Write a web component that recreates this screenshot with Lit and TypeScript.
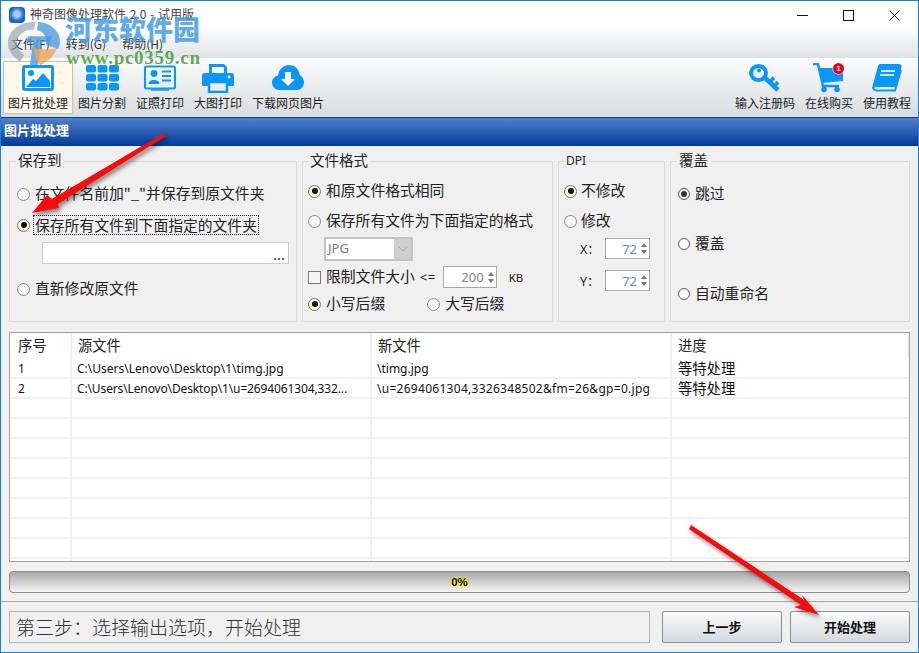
import { LitElement, html, css, svg } from "lit";
import { customElement } from "lit/decorators.js";

const BLUE = "#0a97fb";
const icons: Record<string, unknown> = {
  picture: svg`<svg width="32" height="26" viewBox="0 0 32 26"><rect x="1.5" y="1.5" width="29" height="23" rx="1.5" fill="none" stroke="${BLUE}" stroke-width="3"/><circle cx="9" cy="8" r="3" fill="${BLUE}"/><path d="M4 22 L11 14 L14 16 L21 8 L28 16 V22Z" fill="${BLUE}"/></svg>`,
  grid: svg`<svg width="33" height="26" viewBox="0 0 33 26">${[0, 1, 2].flatMap((r) => [0, 1, 2].map((c) => svg`<rect x="${c * 11.5}" y="${r * 9}" width="10" height="7.5" rx="2" fill="${BLUE}"/>`))}</svg>`,
  card: svg`<svg width="32" height="26" viewBox="0 0 32 26"><rect x="1" y="1.5" width="30" height="22" rx="1.5" fill="none" stroke="${BLUE}" stroke-width="2"/><circle cx="10" cy="8.5" r="3.4" fill="${BLUE}"/><path d="M4.5 19 C4.5 13.5 15.5 13.5 15.5 19Z" fill="${BLUE}"/><path d="M18 6.5H27M18 11H27M18 15.5H27" stroke="${BLUE}" stroke-width="2"/><path d="M7 25H25" stroke="${BLUE}" stroke-width="1.5"/></svg>`,
  printer: svg`<svg width="32" height="30" viewBox="0 0 32 30"><path d="M7 10V1H22L25 4V10H22V4H10V10Z" fill="${BLUE}"/><path d="M3 10H29Q32 10 32 13V23H26V18H6V23H0V13Q0 10 3 10Z" fill="${BLUE}"/><path d="M7 19H25V29H7Z" fill="none" stroke="${BLUE}" stroke-width="2.5"/><circle cx="27" cy="14" r="1.4" fill="#fff"/></svg>`,
  cloud: svg`<svg width="32" height="26" viewBox="0 0 32 26"><path d="M8 25C3 25 0 21.500 0 17.500C0 13.500 3 11 6 10.500C7 4 12 0 17 0C23 0 27 4 27.500 9.500C30 11 32 14 32 17.500C32 22 28.500 25 25 25Z" fill="${BLUE}"/><path d="M13 7H19V14H23L16 21L9 14H13Z" fill="#fff"/></svg>`,
  key: svg`<svg width="32" height="29" viewBox="0 0 32 29"><path d="M14 12L29 26" stroke="${BLUE}" stroke-width="4.500" fill="none"/><path d="M21 18L25 13.500M26 21.500L29 18" stroke="${BLUE}" stroke-width="3.500" fill="none"/><ellipse cx="9.500" cy="9" rx="7.500" ry="7" fill="none" stroke="${BLUE}" stroke-width="4"/><circle cx="10" cy="6.500" r="2" fill="${BLUE}"/></svg>`,
  cart: svg`<svg width="32" height="30" viewBox="0 0 32 30"><path d="M0 1H5L10 23H26" fill="none" stroke="${BLUE}" stroke-width="2.500"/><path d="M6 5H30V18L9 20Z" fill="${BLUE}"/><circle cx="11" cy="26.500" r="2.800" fill="${BLUE}"/><circle cx="24" cy="26.500" r="2.800" fill="${BLUE}"/></svg>`,
  book: svg`<svg width="32" height="29" viewBox="0 0 32 29"><path d="M8 1H28Q30 1 29.500 3L25 21Q24.500 22 23 22H6Q3 22 2 24Q3 26.500 6 26.500H24L30 6" fill="none" stroke="${BLUE}" stroke-width="2"/><path d="M8 1H28Q30 1 29.500 3L25 21Q24.500 22 23 22H5Q3 22 1 24L7 2Q7.500 1 8 1Z" fill="${BLUE}"/><path d="M10 7H24M9 11H23" stroke="#cfeaff" stroke-width="2"/></svg>`,
};

type Tool = { icon: string; label: string; active?: boolean; badge?: boolean };
const LEFT_TOOLS: Tool[] = [
  { icon: "picture", label: "图片批处理", active: true },
  { icon: "grid", label: "图片分割" },
  { icon: "card", label: "证照打印" },
  { icon: "printer", label: "大图打印" },
  { icon: "cloud", label: "下载网页图片" },
];
const RIGHT_TOOLS: Tool[] = [
  { icon: "key", label: "输入注册码" },
  { icon: "cart", label: "在线购买", badge: true },
  { icon: "book", label: "使用教程" },
];
const ROWS = [
  ["1", "C:\\Users\\Lenovo\\Desktop\\1\\timg.jpg", "\\timg.jpg", "等特处理"],
  ["2", "C:\\Users\\Lenovo\\Desktop\\1\\u=2694061304,332...", "\\u=2694061304,3326348502&fm=26&gp=0.jpg", "等特处理"],
  ...Array.from({ length: 9 }, () => ["", "", "", ""]),
];

@customElement("app-root")
export class AppRoot extends LitElement {
  static styles = css`
    :host { display: block; width: 919px; height: 653px; position: relative; overflow: hidden;
      font-family: "Noto Sans CJK SC", "Noto Sans", sans-serif; color: #222; }
    * { box-sizing: border-box; }
    .win { height: 653px; display: flex; flex-direction: column; background: #f0f0f0; border: 1px solid #1383d8; }
    .titlebar { height: 57px; flex: none; background: linear-gradient(#fff 0, #fff 26px, #dfe2e5 57px); display: flex; flex-direction: column; }
    .title-row { height: 29px; display: flex; align-items: center; padding: 0 0 4px 8px; gap: 5px; font-size: 12px; word-spacing: 1px; color: #444; position: relative; }
    .app-icon { width: 16px; height: 16px; margin-top: 2px; border-radius: 4px; background: radial-gradient(circle at 50% 45%, #a9cbee 0 3px, #4f90da 5px, #0d66d0 7.5px); }
    .title-spacer { flex: 1; }
    .winbtn { width: 46px; height: 20px; display: flex; align-items: center; justify-content: center; margin-top: 3px; }
    .winbtns { display: flex; margin-right: 1px; }
    .menu { display: flex; height: 26px; align-items: center; font-size: 12px; color: #333; padding-left: 10px; gap: 16px; }
    .toolbar { height: 59px; flex: none; background: linear-gradient(#fbfbfb, #d9dcdf); display: flex; justify-content: space-between; padding: 3px 2px 0 2px; }
    .tools { display: flex; }
    .tool { height: 53px; display: flex; flex-direction: column; align-items: center; padding: 0 4px; border: 1px solid transparent; font-size: 12px; line-height: 16px; color: #222; position: relative; white-space: nowrap; }
    .tool.active { background: #fdf8ea; border-color: #c8c4ae; border-radius: 2px; box-shadow: 0 0 1px #aaa; }
    .tool-icon { height: 32px; display: flex; align-items: center; justify-content: center; margin-bottom: 1px; }
    .badge { position: absolute; top: 1px; right: 13px; width: 11px; height: 11px; border-radius: 50%; background: #e8001c; color: #fff; font: bold 8px/11px "Liberation Sans", sans-serif; text-align: center; box-shadow: 0 0 0 0.5px #fff; }
    .section { height: 29px; flex: none; background: linear-gradient(#5080cc, #003b97); color: #fff; font-weight: 700; font-size: 13px; line-height: 24px; padding-left: 3px; border-top: 1px solid #0c3a8c; }
    .groups { display: grid; grid-template-columns: 288px 251px 107px 240px; gap: 5px; padding: 15px 8px 0 8px; flex: none; }
    .group { height: 161px; border: 1px solid #d9d9d9; position: relative; display: flex; flex-direction: column; font-size: 14.8px; }
    .legend { position: absolute; top: -12px; left: 6px; background: #f0f0f0; padding: 0 2px; font-size: 14.500px; line-height: 20px; height: 15px; }
    .g-format .legend { left: 5px; }
    .legend.small { font-size: 12px; font-family: "Noto Sans", sans-serif; top: -10px; left: 6px; line-height: 17px; padding: 0 1px; }
    .g-save { padding: 17px 0 0 7px; gap: 1px; }
    .g-format { padding: 14px 0 0 5px; }
    .g-dpi { padding: 14px 0 0 5px; }
    .g-over { padding: 17px 0 0 7px; gap: 20px; }
    .row { height: 30px; display: flex; align-items: center; gap: 4px; white-space: nowrap; }
    .g-save .row, .g-format .row, .g-over .row { gap: 5px; }
    .lbl { padding-bottom: 3px; line-height: 20px; }
    .radio { width: 13px; height: 13px; border-radius: 50%; border: 1px solid #8a8a8a; background: #f6f6f6; flex: none; display: flex; align-items: center; justify-content: center; }
    .radio.on { background: #fdf6dc; border-color: #777; }
    .radio.on::after { content: ""; width: 6px; height: 6px; border-radius: 50%; background: #111; }
    .g-over .radio { width: 12px; height: 12px; }
    .radio.dark { background: #f2f2f2; border-color: #555; }
    .radio.dark::after { background: #333; width: 6px; height: 6px; }
    .radio.strong { border-color: #555; background: #fff; }
    .focus { outline: 1px dotted #222; outline-offset: 0; padding: 0 1px; line-height: 17px; height: 18px; margin: 0 0 1px -1px; }
    .pathbox { height: 22px; width: 247px; margin: 1px 0 0 25px; background: #fff; border: 1px solid #ccc; font: 700 12px/26px "Liberation Sans", sans-serif; color: #5a3a1a; text-align: right; padding-right: 3px; letter-spacing: 0.500px; }
    .after-path { margin-top: 9px; }
    .select { width: 89px; height: 24px; margin: 1px 0 0 16px; background: #cfcfcf; border: 2px solid #c4c4c4; display: flex; font: 13px/19px "Noto Sans", sans-serif; color: #777; }
    .select-val { width: 68px; background: #fff; padding-left: 2px; }
    .select-arrow { flex: 1; display: flex; align-items: center; justify-content: center; }
    .limit { height: 22px; margin-top: 5px; display: flex; align-items: center; white-space: nowrap; }
    .check { width: 13px; height: 13px; border: 1px solid #777; background: #f5f5f5; margin-right: 5px; flex: none; }
    .le { font: 13px "Noto Sans", sans-serif; margin: 0 7px 0 5px; letter-spacing: 0.500px; }
    .kb { font: 11.500px "Noto Sans", sans-serif; margin-left: 12px; }
    .spin { height: 22px; background: #fff; border: 1px solid #aaa8a0; display: flex; align-items: center; justify-content: flex-end; font: 13px "Noto Sans", sans-serif; color: #7a7f9c; gap: 4px; padding-right: 2px; }
    .spin.w200 { width: 54px; }
    .spin.w72 { width: 45px; height: 21px; }
    .arrows { display: flex; flex-direction: column; gap: 3px; }
    .up, .down { width: 0; height: 0; border-left: 3px solid transparent; border-right: 3px solid transparent; }
    .up { border-bottom: 4px solid #777; }
    .down { border-top: 4px solid #777; }
    .suffix { height: 24px; margin-top: 4px; display: flex; align-items: center; white-space: nowrap; }
    .suffix .radio { margin-right: 5px; }
    .suffix .gapper { width: 42px; }
    .xy { display: flex; align-items: center; font: 12.500px "Noto Sans", "Noto Sans CJK SC", sans-serif; padding-left: 16px; white-space: nowrap; }
    .xy b { font-weight: 400; width: 25px; }
    .xy.x { margin-top: 2px; }
    .xy.y { margin-top: 11px; }
    .table { margin: 10px 8px 0 8px; height: 230px; flex: none; background: #fff; border: 1px solid #a0a0a0; overflow: hidden; display: flex; flex-direction: column; }
    .thead, .trow { display: grid; grid-template-columns: 61px 300px 300px 237px; padding-left: 1px; }
    .thead { height: 25px; font-size: 14.300px; align-items: center; line-height: 24px; }
    .thead > div { height: 25px; padding-left: 6px; border-right: 2px solid #f0f0f0; }
    .thead > div:first-child { padding-left: 7px; }
    .trow { height: 20px; border-bottom: 2px solid #f0f0f0; font: 12px/17px "Noto Sans", sans-serif; flex: none; }
    .trow > div { padding-left: 5px; border-right: 2px solid #f0f0f0; white-space: nowrap; color: #111; min-width: 0; }
    .trow > div:first-child { padding-left: 7px; }
    .trow > div:last-child { border-right: 0; padding-left: 6px; font: 14.300px/17px "Noto Sans CJK SC", sans-serif; }
    .trow.first { height: 21px; }
    .trow.first > div { padding-top: 2px; }
    .trow.first > div:last-child { padding-top: 1px; }
    .trow.second > div { padding-top: 1px; }
    .trow.second > div:last-child { padding-top: 0; }
    .trow.second > div:nth-child(2) { letter-spacing: -0.130px; }
    .trow.second > div:nth-child(3) { letter-spacing: 0.280px; }
    .progress { margin: 9px 8px 0 8px; height: 22px; flex: none; border: 1px solid #8e8e8e; border-radius: 4px; background: linear-gradient(#a8a8a8, #f4f4f4); display: flex; align-items: center; justify-content: center; font: 700 11.500px "Liberation Sans", sans-serif; color: #111; }
    .pct { text-shadow: 0 0 2px #ffee00, 0 0 2px #ffee00, 0 0 1px #ffee00; }
    .footer { margin-top: 8px; border-top: 1px solid #a8a8a8; padding: 9px 8px 0 8px; display: flex; flex: none; height: 42px; }
    .status { width: 641px; height: 32px; border: 1px solid #b4b4b4; font-family: "Noto Sans CJK SC", serif; font-size: 19px; line-height: 29px; color: #333; padding-left: 6px; font-weight: 300; white-space: nowrap; }
    .btn { height: 32px; width: 120px; border: 1px solid #8f8f8f; border-radius: 2px; background: linear-gradient(#fafafa, #d5d9dd); font-weight: 700; font-size: 13px; line-height: 30px; text-align: center; color: #111; }
    .btn.prev { margin-left: 12px; }
    .btn.go { margin-left: 8px; }
    .overlay { position: absolute; inset: 0; pointer-events: none; }
    .wm-text { position: absolute; left: 65px; top: 9px; font-size: 27px; font-weight: 900; line-height: 40px; color: rgba(70, 155, 228, 0.85); white-space: nowrap; }
    .wm-url { position: absolute; left: 66px; top: 48px; font: 700 19px/20px "Liberation Serif", serif; color: rgba(75, 160, 60, 0.9); white-space: nowrap; letter-spacing: 0.700px; }
    .wm-logo, .arrows-svg { position: absolute; left: 0; top: 0; }
  `;

  private tool(t: Tool) {
    return html`<div class="tool ${t.active ? "active" : ""}">
      <div class="tool-icon">${icons[t.icon]}</div>
      ${t.label}
      ${t.badge ? html`<span class="badge">1</span>` : ""}
    </div>`;
  }

  private radio(label: string, cls = "") {
    return html`<div class="row"><span class="radio ${cls}"></span><span class="lbl">${label}</span></div>`;
  }

  private spinbox(v: string, cls: string) {
    return html`<div class="spin ${cls}">${v}<span class="arrows"><span class="up"></span><span class="down"></span></span></div>`;
  }

  render() {
    return html`
      <div class="win">
        <div class="titlebar">
          <div class="title-row">
            <span class="app-icon"></span>
            <span>神奇图像处理软件 2.0 - 试用版</span>
            <span class="title-spacer"></span>
            <div class="winbtns">
              <div class="winbtn"><svg width="11" height="11" viewBox="0 0 11 11"><path d="M0 5.500H11" stroke="#111"/></svg></div>
              <div class="winbtn"><svg width="11" height="11" viewBox="0 0 11 11"><rect x="0.500" y="0.500" width="10" height="10" fill="none" stroke="#111"/></svg></div>
              <div class="winbtn"><svg width="11" height="11" viewBox="0 0 11 11"><path d="M0.500 0.500L10.500 10.500M10.500 0.500L0.500 10.500" stroke="#111"/></svg></div>
            </div>
          </div>
          <div class="menu"><span>文件(F)</span><span>转到(G)</span><span>帮助(H)</span></div>
        </div>
        <div class="toolbar">
          <div class="tools">${LEFT_TOOLS.map((t) => this.tool(t))}</div>
          <div class="tools">${RIGHT_TOOLS.map((t) => this.tool(t))}</div>
        </div>
        <div class="section">图片批处理</div>
        <div class="groups">
          <div class="group g-save">
            <span class="legend">保存到</span>
            ${this.radio('在文件名前加"_"并保存到原文件夹')}
            <div class="row"><span class="radio on"></span><span class="focus">保存所有文件到下面指定的文件夹</span></div>
            <div class="pathbox">...</div>
            <div class="row after-path"><span class="radio"></span><span class="lbl">直新修改原文件</span></div>
          </div>
          <div class="group g-format">
            <span class="legend">文件格式</span>
            ${this.radio("和原文件格式相同", "on")}
            ${this.radio("保存所有文件为下面指定的格式")}
            <div class="select"><div class="select-val">JPG</div><div class="select-arrow"><svg width="10" height="6" viewBox="0 0 10 6"><path d="M1 1L5 5L9 1" fill="none" stroke="#aaa"/></svg></div></div>
            <div class="limit"><span class="check"></span><span class="lbl">限制文件大小</span><span class="le">&lt;=</span>${this.spinbox("200", "w200")}<span class="kb">KB</span></div>
            <div class="suffix"><span class="radio on"></span><span class="lbl">小写后缀</span><span class="gapper"></span><span class="radio"></span><span class="lbl">大写后缀</span></div>
          </div>
          <div class="group g-dpi">
            <span class="legend small">DPI</span>
            ${this.radio("不修改", "on")}
            ${this.radio("修改")}
            <div class="xy x"><b>X：</b>${this.spinbox("72", "w72")}</div>
            <div class="xy y"><b>Y：</b>${this.spinbox("72", "w72")}</div>
          </div>
          <div class="group g-over">
            <span class="legend">覆盖</span>
            ${this.radio("跳过", "on dark")}
            ${this.radio("覆盖", "strong")}
            ${this.radio("自动重命名", "strong")}
          </div>
        </div>
        <div class="table">
          <div class="thead"><div>序号</div><div>源文件</div><div>新文件</div><div>进度</div></div>
          ${ROWS.map((r, i) => html`<div class="trow ${i === 0 ? "first" : i === 1 ? "second" : ""}">${r.map((c) => html`<div>${c}</div>`)}</div>`)}
        </div>
        <div class="progress"><span class="pct">0%</span></div>
        <div class="footer">
          <div class="status">第三步：选择输出选项，开始处理</div>
          <div class="btn prev">上一步</div>
          <div class="btn go">开始处理</div>
        </div>
      </div>
      <div class="overlay">
        <svg class="wm-logo" width="70" height="75" viewBox="0 0 70 75">
          <g transform="translate(0,9) scale(1,.85)">
          <path d="M8 40 C8 24 22 14 36 15 L34 24 C24 24 17 31 17 40 C17 46 20 50 24 54 L20 62 C12 56 8 49 8 40Z" fill="rgba(150,160,170,.65)"/>
          <path d="M38 15 C50 16 60 26 60 38 C60 42 59 45 58 47 L46 42 C48 34 44 27 37 25Z" fill="rgba(70,150,220,.75)"/>
          <path d="M28 32H52L50 39H42L38 66H30L33 39H26Z" fill="rgba(70,150,220,.75)"/>
          <path d="M34 46C42 48 50 48 57 46C54 56 48 62 40 66C36 60 34 54 34 46Z" fill="rgba(240,165,90,.8)"/>
          </g>
        </svg>
        <div class="wm-text">河东软件园</div>
        <div class="wm-url">www.pc0359.cn</div>
        <svg class="arrows-svg" width="919" height="653" viewBox="0 0 919 653">
          <defs><filter id="sh" x="-20%" y="-20%" width="140%" height="140%"><feDropShadow dx="2" dy="3" stdDeviation="2" flood-color="#000" flood-opacity="0.45"/></filter></defs>
          <path d="M164 133 L166 136 L58 204 L59 208 L32 213 L47 195 L52 199 Z" fill="#f40808" filter="url(#sh)"/>
          <path d="M691 525 L804 600 L802 595 L819 615 L794 607 L801 605 L689 529 Z" fill="#f40808" filter="url(#sh)"/>
        </svg>
      </div>
    `;
  }
}
